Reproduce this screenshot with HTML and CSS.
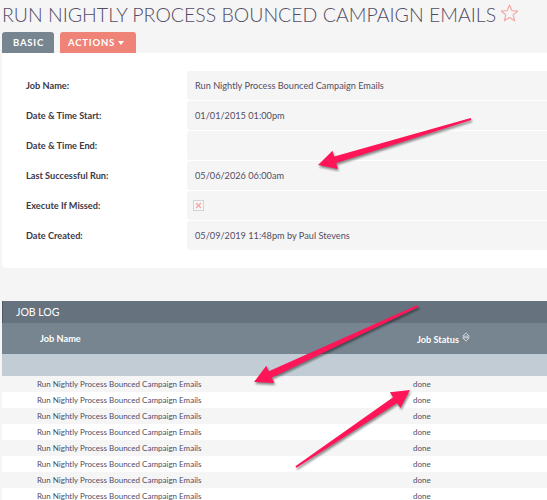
FILE: index.html
```html
<!DOCTYPE html>
<html lang="en">
<head>
    <meta charset="UTF-8">
    <title>Run Nightly Process Bounced Campaign Emails</title>
    <link rel="stylesheet" href="styles.css">
</head>
<body>

  <!-- title + favourite star -->
  <div class="title-row">
    <h2 class="page-title">Run Nightly Process Bounced Campaign Emails</h2>
    <svg class="star" width="19" height="18" viewBox="0 0 19 18">
      <polygon points="9.5,1 11.8,6.6 17.8,7 13.2,10.9 14.7,16.8 9.5,13.6 4.3,16.8 5.8,10.9 1.2,7 7.2,6.6" fill="none" stroke="#f3aaa6" stroke-width="1.2" stroke-linejoin="round"/>
    </svg>
  </div>

  <!-- tabs -->
  <div class="tabs">
    <div class="tab tab-basic">BASIC</div>
    <div class="tab tab-actions">ACTIONS <span class="caret"></span></div>
  </div>

  <!-- detail panel -->
  <div class="panel">
    <div class="detail-row">
      <div class="label">Job Name:</div>
      <div class="value">Run Nightly Process Bounced Campaign Emails</div>
    </div>
    <div class="detail-row">
      <div class="label">Date &amp; Time Start:</div>
      <div class="value">01/01/2015 01:00pm</div>
    </div>
    <div class="detail-row">
      <div class="label">Date &amp; Time End:</div>
      <div class="value"></div>
    </div>
    <div class="detail-row">
      <div class="label">Last Successful Run:</div>
      <div class="value">05/06/2026 06:00am</div>
    </div>
    <div class="detail-row">
      <div class="label">Execute If Missed:</div>
      <div class="value">
        <svg class="checkbox" width="11" height="11" viewBox="0 0 11 11">
          <rect x="0.5" y="0.5" width="10" height="10" fill="#f7f7f7" stroke="#cfd3da"/>
          <path d="M3 3 L8 8 M8 3 L3 8" stroke="#f2a5a0" stroke-width="1.3"/>
        </svg>
      </div>
    </div>
    <div class="detail-row">
      <div class="label">Date Created:</div>
      <div class="value">05/09/2019 11:48pm by Paul Stevens</div>
    </div>
  </div>

  <!-- job log subpanel -->
  <div class="joblog">
    <div class="joblog-header">JOB LOG</div>
    <table class="log-table">
      <colgroup>
        <col class="col-first">
        <col>
      </colgroup>
      <thead>
        <tr class="col-head">
          <th class="col-name">Job Name</th>
          <th class="col-status">Job Status
            <svg class="sort" width="8" height="10" viewBox="0 0 8 10">
              <path d="M4 0.8 L7.2 4.2 H0.8 Z M4 9.2 L7.2 5.8 H0.8 Z" fill="none" stroke="#e6eaee" stroke-width="0.8" stroke-linejoin="round"/>
            </svg>
          </th>
        </tr>
        <tr class="filter-row"><th colspan="2"></th></tr>
      </thead>
      <tbody>
        <tr><td class="col-name">Run Nightly Process Bounced Campaign Emails</td><td class="col-status">done</td></tr>
        <tr><td class="col-name">Run Nightly Process Bounced Campaign Emails</td><td class="col-status">done</td></tr>
        <tr><td class="col-name">Run Nightly Process Bounced Campaign Emails</td><td class="col-status">done</td></tr>
        <tr><td class="col-name">Run Nightly Process Bounced Campaign Emails</td><td class="col-status">done</td></tr>
        <tr><td class="col-name">Run Nightly Process Bounced Campaign Emails</td><td class="col-status">done</td></tr>
        <tr><td class="col-name">Run Nightly Process Bounced Campaign Emails</td><td class="col-status">done</td></tr>
        <tr><td class="col-name">Run Nightly Process Bounced Campaign Emails</td><td class="col-status">done</td></tr>
        <tr><td class="col-name">Run Nightly Process Bounced Campaign Emails</td><td class="col-status">done</td></tr>
      </tbody>
    </table>
  </div>

  <!-- annotation arrows drawn over the screenshot -->
  <svg class="arrows" width="547" height="500" viewBox="0 0 547 500">
    <polygon points="471.3,120 336.2,163.1 337.9,168.9 318,165 332.5,150.7 334.2,156.5 470.7,118"/>
    <polygon points="418.4,306.9 271.8,377.6 274.3,383 254,382 266.3,365.8 268.8,371.2 417.6,305.1"/>
    <polygon points="296.6,467.8 397.1,403 400.4,408 410,390 389.8,392.2 393.1,397.2 295.4,466.2"/>
  </svg>

</body>
</html>
```

FILE: styles.css
```css
html, body {
  margin: 0;
  padding: 0;
}

body {
  background-color: #f5f5f5;
  font-family: Lato, "Open Sans", sans-serif;
  color: #534d64;
  padding-left: 2px;
  width: 545px;
  height: 500px;
  overflow: hidden;
  position: relative;
}

/* title */
.title-row {
  display: flex;
  align-items: center;
  gap: 4px;
  height: 28px;
}

.page-title {
  margin: 0;
  font-weight: 300;
  font-size: 19.5px;
  letter-spacing: 0;
  text-transform: uppercase;
  color: #534d64;
  white-space: nowrap;
}

.star {
  margin-top: -2px;
}

/* tabs */
.tabs {
  display: flex;
  gap: 6px;
  margin-top: 4px;
  height: 21px;
}

.tab {
  display: flex;
  align-items: center;
  color: white;
  font-weight: 700;
  font-size: 9.5px;
  letter-spacing: 0.8px;
  border-radius: 3px 3px 0 0;
}

.tab-basic {
  background-color: #778591;
  padding: 0 10px 0 11px;
}

.tab-actions {
  background-color: #f08377;
  padding: 0 12px 0 8px;
}

.caret {
  display: inline-block;
  margin-left: 3px;
  border-left: 3.5px solid transparent;
  border-right: 3.5px solid transparent;
  border-top: 4px solid white;
}

/* detail panel */
.panel {
  background-color: white;
  padding: 18px 0 18px 24px;
  border-radius: 0 0 0 4px;
  display: flex;
  flex-direction: column;
  gap: 1px;
}

.detail-row {
  display: grid;
  grid-template-columns: 161px 1fr;
  height: 29px;
}

.label {
  display: flex;
  align-items: center;
  font-weight: 700;
  font-size: 9.2px;
  color: #3b3947;
}

.value {
  display: flex;
  align-items: center;
  background-color: #f5f5f5;
  border-radius: 3px 0 0 3px;
  padding-left: 8px;
  font-size: 9.2px;
  color: #534d64;
}

.checkbox {
  margin-left: -2px;
}

/* job log */
.joblog {
  margin-top: 33px;
}

.joblog-header {
  background-color: #66727d;
  color: white;
  height: 22px;
  line-height: 22px;
  padding-left: 13px;
  font-size: 10.5px;
  border-left: 1px solid #4e5862;
}

.log-table {
  width: 100%;
  border-collapse: collapse;
  table-layout: fixed;
}

.col-first {
  width: 411px;
}

.col-head th {
  background-color: #778590;
  color: white;
  font-weight: 700;
  font-size: 9.2px;
  height: 31px;
  padding: 0;
  text-align: left;
}

.col-head .col-name {
  padding-left: 38px;
}

.col-head .col-status {
  padding-left: 4px;
}

.sort {
  vertical-align: 1px;
  margin-left: 1px;
}

.filter-row th {
  background-color: #c2ccd4;
  height: 22px;
  padding: 0;
}

.log-table td {
  height: 16px;
  padding: 0;
  font-size: 8px;
  color: #534d64;
  white-space: nowrap;
}

.log-table tbody tr:nth-child(odd) td {
  background-color: #f5f5f5;
}

.log-table tbody tr:nth-child(even) td {
  background-color: white;
}

.log-table td.col-name {
  padding-left: 35px;
}

/* annotation arrows */
.arrows {
  position: absolute;
  left: 0;
  top: 0;
  pointer-events: none;
}

.arrows polygon {
  fill: #ff1558;
  filter: drop-shadow(1px 2px 1px rgba(0, 0, 0, 0.45));
}
```
